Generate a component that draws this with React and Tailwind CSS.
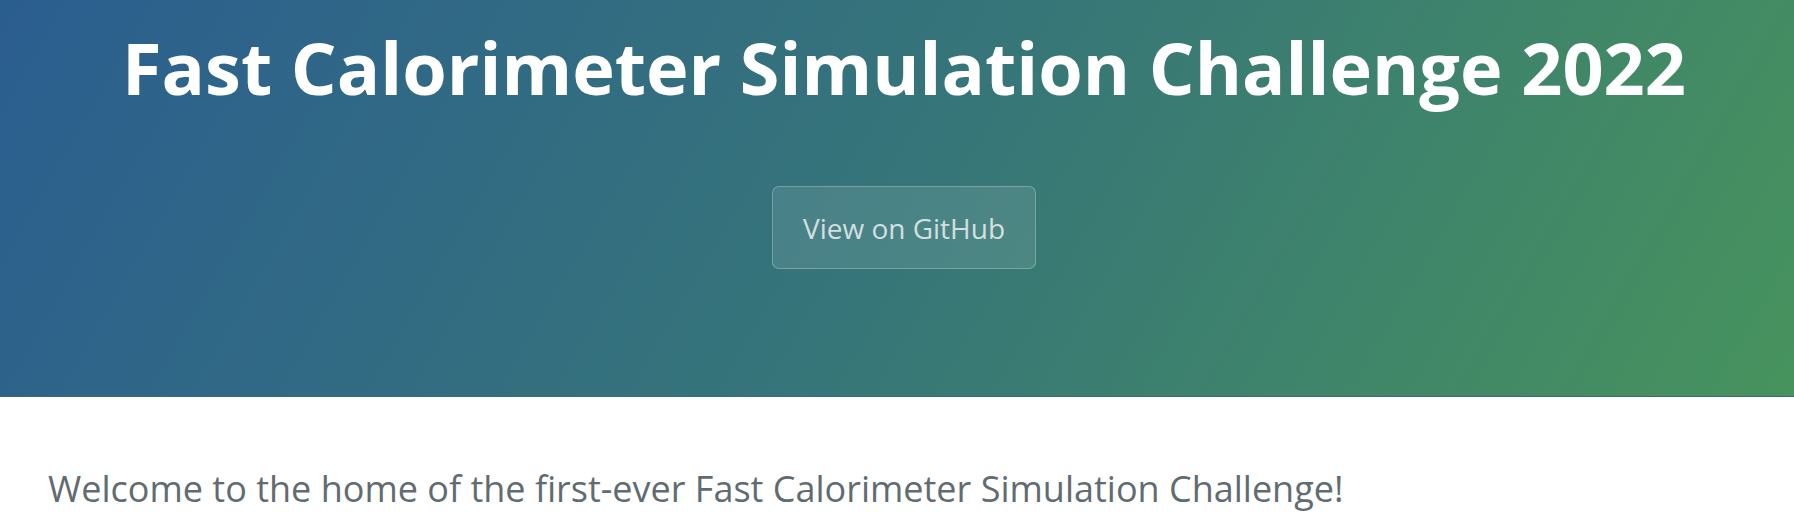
import React from 'react';

const App = () => {
  return (
    <div className="min-h-screen bg-white font-['Open_Sans',sans-serif]">
      {/* Page header */}
      <header className="h-[397px] flex flex-col items-center pt-[27px] pl-[14px] bg-[linear-gradient(120deg,#2b5e90,#367579_50%,#47935d)] border-b border-[#3a6f7a]">
        <h1 className="text-[72px] leading-[81px] font-bold text-white">
          Fast Calorimeter Simulation Challenge 2022
        </h1>
        <a
          href="#"
          className="mt-[78px] h-[83px] px-[30px] flex items-center rounded-[7px] border border-white/25 bg-white/10 text-[28px] text-white/75"
        >
          View on GitHub
        </a>
      </header>

      {/* Content */}
      <main className="px-[48px] pt-[66px]">
        <p className="text-[36px] leading-[52px] text-[#606c71]">
          Welcome to the home of the first-ever Fast Calorimeter Simulation Challenge!
        </p>
      </main>
    </div>
  );
};

export default App;
